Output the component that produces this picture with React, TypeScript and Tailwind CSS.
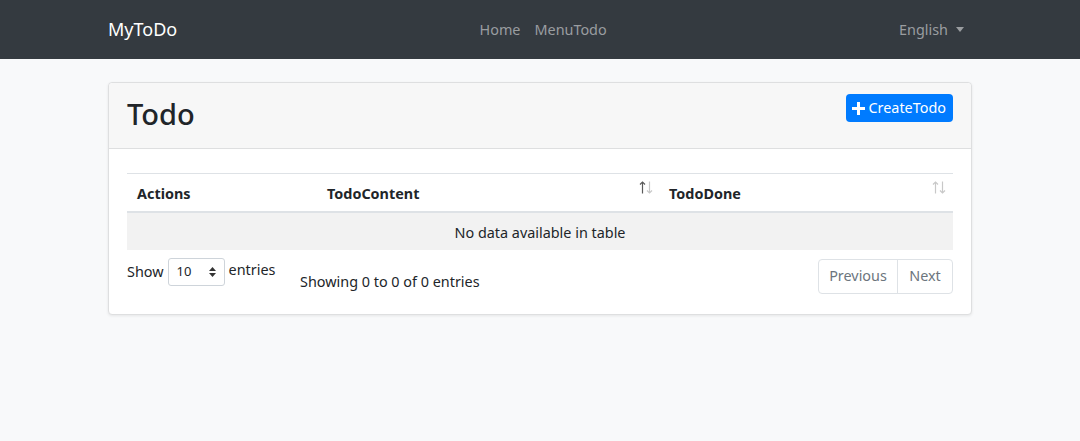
import React from "react";

const SortIcon = ({ upDark }: { upDark?: boolean }) => (
  <svg width="14" height="13" viewBox="0 0 14 13">
    <g stroke={upDark ? "#5a5a5a" : "#c8c8c8"} strokeWidth="1.2" fill="none">
      <path d="M3.5 1.5V12.5" />
      <path d="M1 3.5L3.5 1L6 3.5" />
    </g>
    <g stroke="#c8c8c8" strokeWidth="1.2" fill="none">
      <path d="M10.5 0.5V11.5" />
      <path d="M8 9.5L10.5 12L13 9.5" />
    </g>
  </svg>
);

export default function App() {
  return (
    <div
      className="min-h-[441px] bg-[#f8f9fa] text-[#212529]"
      style={{ fontFamily: '"Noto Sans", "Open Sans", sans-serif' }}
    >
      <nav className="h-[59px] bg-[#343a40] flex items-center">
        <div className="w-[864px] mx-auto flex items-center justify-between">
          <span className="text-white text-[18px]">MyToDo</span>
          <div className="flex gap-[14px] text-[14.4px] text-[#9a9da0] ml-[10px]">
            <span>Home</span>
            <span>MenuTodo</span>
          </div>
          <div className="flex items-center text-[14.4px] text-[#9a9da0] mr-[8px]">
            <span>English</span>
            <span className="ml-[8px] w-0 h-0 border-l-[4.5px] border-r-[4.5px] border-t-[5px] border-l-transparent border-r-transparent border-t-[#9a9da0]" />
          </div>
        </div>
      </nav>

      <div className="w-[864px] mx-auto mt-[23px] bg-white border border-[#dedfe0] rounded-[4px] shadow-[0_1px_3px_rgba(0,0,0,0.08)]">
        <div className="h-[66px] bg-[#f7f7f7] border-b border-[#dedfe0] flex items-center justify-between px-[18px] rounded-t-[4px]">
          <h1 className="text-[29px] font-medium leading-none mt-[-4px]">Todo</h1>
          <button className="h-[28px] self-start mt-[11px] bg-[#007bff] text-white rounded-[4px] pl-[6px] pr-[7px] text-[14.4px] flex items-center gap-[3px]">
            <svg width="13" height="13" viewBox="0 0 13 13">
              <path d="M5 0h3v5h5v3H8v5H5V8H0V5h5z" fill="white" />
            </svg>
            CreateTodo
          </button>
        </div>

        <div className="px-[18px] pt-[24px] pb-[20px]">
          <table className="w-full border-collapse text-[14.4px]">
            <thead>
              <tr className="border-t border-[#dee2e6] border-b-2 border-b-[#dee2e6]">
                <th className="w-[190px] text-left font-bold px-[10px] pt-[4px] h-[38px]">Actions</th>
                <th className="w-[342px] text-left font-bold px-[10px] pt-[4px] relative">
                  TodoContent
                  <span className="absolute right-[6px] top-[7px]"><SortIcon upDark /></span>
                </th>
                <th className="text-left font-bold px-[10px] pt-[4px] relative">
                  TodoDone
                  <span className="absolute right-[7px] top-[7px]"><SortIcon /></span>
                </th>
              </tr>
            </thead>
            <tbody>
              <tr className="bg-[#f2f2f2]">
                <td colSpan={3} className="h-[38px] pt-[3px] text-center">No data available in table</td>
              </tr>
            </tbody>
          </table>

          <div className="flex items-start mt-[8px]">
            <div className="flex items-center w-[173px] text-[14.4px]">
              <span>Show</span>
              <span className="mx-[4px] w-[57px] h-[28px] border border-[#ced4da] rounded-[3px] flex items-center justify-between px-[8px] text-[13px]">
                <span>10</span>
                <svg width="7" height="10" viewBox="0 0 7 10"><path d="M3.5 0L7 4H0z M3.5 10L0 6h7z" fill="#333" /></svg>
              </span>
              <span className="-mt-[4px]">entries</span>
            </div>
            <div className="mt-[13px] text-[14.4px]">Showing 0 to 0 of 0 entries</div>
            <div className="ml-auto flex mt-[1px] text-[14.4px] text-[#6c757d] border border-[#dee2e6] rounded-[4px] h-[35px]">
              <span className="w-[79px] flex items-center justify-center border-r border-[#dee2e6]">Previous</span>
              <span className="w-[54px] flex items-center justify-center">Next</span>
            </div>
          </div>
        </div>
      </div>
    </div>
  );
}
